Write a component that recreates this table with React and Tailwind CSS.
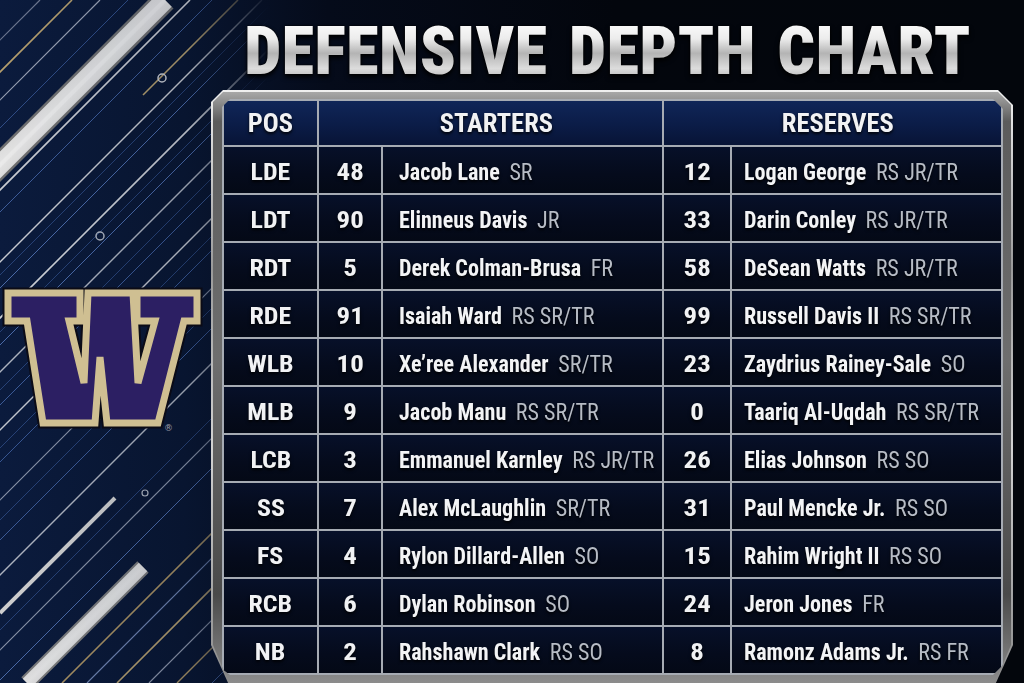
import React from "react";

const rows = [
  ["LDE", "48", "Jacob Lane", "SR", "12", "Logan George", "RS JR/TR"],
  ["LDT", "90", "Elinneus Davis", "JR", "33", "Darin Conley", "RS JR/TR"],
  ["RDT", "5", "Derek Colman-Brusa", "FR", "58", "DeSean Watts", "RS JR/TR"],
  ["RDE", "91", "Isaiah Ward", "RS SR/TR", "99", "Russell Davis II", "RS SR/TR"],
  ["WLB", "10", "Xe\u2019ree Alexander", "SR/TR", "23", "Zaydrius Rainey-Sale", "SO"],
  ["MLB", "9", "Jacob Manu", "RS SR/TR", "0", "Taariq Al-Uqdah", "RS SR/TR"],
  ["LCB", "3", "Emmanuel Karnley", "RS JR/TR", "26", "Elias Johnson", "RS SO"],
  ["SS", "7", "Alex McLaughlin", "SR/TR", "31", "Paul Mencke Jr.", "RS SO"],
  ["FS", "4", "Rylon Dillard-Allen", "SO", "15", "Rahim Wright II", "RS SO"],
  ["RCB", "6", "Dylan Robinson", "SO", "24", "Jeron Jones", "FR"],
  ["NB", "2", "Rahshawn Clark", "RS SO", "8", "Ramonz Adams Jr.", "RS FR"],
];

const lines = [
  { c: 40, w: 1.2, col: "#6d7790" },
  { c: 72, w: 1.6, col: "#b59f6e" },
  { c: 100, w: 1.2, col: "#9aa2b4" },
  { c: 128, w: 1, col: "#2f4c86" },
  { c: 190, w: 1.6, col: "#c9ccd2" },
  { c: 212, w: 1, col: "#3d5c99" },
  { c: 238, w: 1.6, col: "#b59f6e", y0: 0, y1: 95 },
  { c: 262, w: 1.4, col: "#c9ccd2" },
  { c: 275, w: 0.8, col: "#2f4c86" },
  { c: 288, w: 1, col: "#4a6aa8" },
  { c: 318, w: 1.6, col: "#d0d3d8" },
  { c: 332, w: 0.8, col: "#2f4c86" },
  { c: 345, w: 1, col: "#4a6aa8" },
  { c: 372, w: 1.4, col: "#aeb4c0" },
  { c: 390, w: 0.8, col: "#2f4c86" },
  { c: 405, w: 1, col: "#3b5a96" },
  { c: 430, w: 1.4, col: "#c2c6ce" },
  { c: 448, w: 0.8, col: "#2f4c86" },
  { c: 462, w: 1, col: "#365591" },
  { c: 500, w: 1.2, col: "#8d96aa" },
  { c: 520, w: 0.8, col: "#2f4c86" },
  { c: 540, w: 1, col: "#3b5a96" },
  { c: 575, w: 1.4, col: "#aeb4c0" },
  { c: 630, w: 0.8, col: "#2f4c86" },
  { c: 650, w: 1.2, col: "#8d96aa" },
  { c: 680, w: 1, col: "#4a6aa8" },
  { c: 745, w: 1.6, col: "#a89162" },
  { c: 770, w: 1.2, col: "#6f84b0" },
  { c: 800, w: 1.6, col: "#b59f6e" },
  { c: 832, w: 1.2, col: "#8d96aa" },
  { c: 860, w: 1.4, col: "#a89162" },
  { c: 895, w: 1, col: "#4a6aa8" },
];

function Seg({ c, w, col, y0 = 0, y1 = 683 }) {
  return <line x1={c - y0} y1={y0} x2={c - y1} y2={y1} stroke={col} strokeWidth={w} />;
}

function Decor() {
  return (
    <svg className="absolute left-0 top-0" width="270" height="683" viewBox="0 0 270 683">
      <defs>
        <linearGradient id="fadeR" x1="0" y1="0" x2="1" y2="0">
          <stop offset="0" stopColor="#fff" stopOpacity="1" />
          <stop offset="0.7" stopColor="#fff" stopOpacity="0.85" />
          <stop offset="1" stopColor="#fff" stopOpacity="0" />
        </linearGradient>
        <mask id="m">
          <rect x="0" y="0" width="270" height="683" fill="url(#fadeR)" />
        </mask>
        <linearGradient id="silv" x1="0" y1="0" x2="1" y2="1">
          <stop offset="0" stopColor="#8d8d8d" />
          <stop offset="0.5" stopColor="#e4e4e4" />
          <stop offset="1" stopColor="#7a7a7a" />
        </linearGradient>
      </defs>
      <g mask="url(#m)">
        {lines.map((l, i) => (
          <Seg key={i} {...l} />
        ))}
        <line x1="165" y1="0" x2="-10" y2="175" stroke="#6f6f6f" strokeWidth="24" />
        <line x1="165" y1="0" x2="-10" y2="175" stroke="url(#silv)" strokeWidth="19" />
        <line x1="165" y1="0" x2="-10" y2="175" stroke="#f2f2f2" strokeWidth="4" opacity="0.5" />
        <line x1="115" y1="498" x2="0" y2="613" stroke="#cfcfcf" strokeWidth="4" />
        <line x1="143" y1="567" x2="27" y2="683" stroke="#7a7a7a" strokeWidth="16" />
        <line x1="143" y1="567" x2="27" y2="683" stroke="url(#silv)" strokeWidth="12" />
        <circle cx="162" cy="78" r="4" fill="none" stroke="#c9ccd2" strokeWidth="1.5" />
        <circle cx="100" cy="236" r="4" fill="none" stroke="#aeb4c0" strokeWidth="1.5" />
        <circle cx="145" cy="493" r="3" fill="none" stroke="#aeb4c0" strokeWidth="1.2" />
      </g>
    </svg>
  );
}

const wPts =
  "8,293 80,293 80,321 69,321 84,383 88,293 133,293 138,383 155,321 137,321 137,293 197,293 197,321 184,321 158,423 107,423 100,357 95,423 43,423 27,321 8,321";

function WLogo() {
  return (
    <svg width="211" height="150" viewBox="0 285 211 150">
      <polygon points={wPts} fill="#0b0b16" stroke="#0b0b16" strokeWidth="11" strokeLinejoin="miter" />
      <polygon points={wPts} fill="#2c1f63" stroke="#cfbf92" strokeWidth="7" strokeLinejoin="miter" />
      <text x="164" y="431" fontSize="9" fill="#9a9aa6" fontFamily="DejaVu Sans, sans-serif">
        ®
      </text>
    </svg>
  );
}

const cellBase =
  "h-[46px] overflow-hidden bg-[linear-gradient(180deg,#071029_0%,#050b1c_60%,#040916_100%)] flex items-center";
const headCell =
  "h-[44px] pt-[2px] bg-[linear-gradient(180deg,#102658_0%,#0b1c47_55%,#081436_100%)] flex items-center justify-center text-[25px] font-bold text-[#f1f2f4]";
const shadow = "[text-shadow:0_2px_3px_rgba(0,0,0,0.9)]";
const numCell = `${cellBase} pt-[3px] justify-center text-[24px] font-bold text-[#f1f2f4] ${shadow}`;

function Name({ name, cls }) {
  return (
    <span className="inline-block origin-left scale-x-[0.96] whitespace-nowrap text-[23px]">
      <span className="font-bold text-[#f3f4f6]">{name}</span>
      <span className="ml-[10px] text-[#b7bcc5]">{cls}</span>
    </span>
  );
}

export default function App() {
  return (
    <div className="relative w-[1024px] h-[683px] overflow-hidden bg-[linear-gradient(90deg,#0b1b3d_0%,#081530_18%,#050b1a_32%,#03060d_60%,#03060c_100%)] font-['Roboto_Condensed','DejaVu_Sans_Condensed',sans-serif]">
      <Decor />
      <div className="relative flex h-full">
        <div className="w-[211px] shrink-0 pt-[285px]">
          <WLogo />
        </div>
        <div className="w-[802px] shrink-0 flex flex-col">
          <h1 className="mt-[19px] h-[67px] pr-[9px] flex justify-center whitespace-nowrap text-[66px] leading-none font-black [filter:drop-shadow(0_0_1px_#000)_drop-shadow(0_3px_2px_rgba(0,0,0,0.9))]">
            <span className="inline-block tracking-[0.5px] [word-spacing:6px] bg-[linear-gradient(180deg,#ffffff_0%,#ececec_30%,#b4b4b4_52%,#dcdcdc_75%,#a6a6a6_100%)] bg-clip-text text-transparent">
              DEFENSIVE DEPTH CHART
            </span>
          </h1>
          <div className="mt-[5px] p-[2px] bg-[linear-gradient(180deg,#f0f0f0_0%,#9a9a9a_30%,#d2d2d2_60%,#8a8a8a_100%)] [clip-path:polygon(0_12px,12px_0,calc(100%_-_15px)_0,100%_15px,100%_calc(100%_-_40px),calc(100%_-_18px)_100%,18px_100%,0_calc(100%_-_40px))]">
            <div className="pt-[7px] pl-[9px] pr-[8px] pb-[8px] bg-[linear-gradient(180deg,#a8a8a8_0%,#5c5c5c_5%,#6e6e6e_45%,#4a4a4a_85%,#8c8c8c_100%)] [clip-path:polygon(0_10px,10px_0,calc(100%_-_13px)_0,100%_13px,100%_calc(100%_-_38px),calc(100%_-_16px)_100%,16px_100%,0_calc(100%_-_38px))]">
              <div className="grid grid-cols-[93px_62px_279px_66px_269px] gap-[2px] p-[2px] bg-[#a6abb3] [clip-path:polygon(0_8px,8px_0,calc(100%_-_10px)_0,100%_10px,100%_calc(100%_-_10px),calc(100%_-_10px)_100%,8px_100%,0_calc(100%_-_6px))]">
                <div className={`${headCell} ${shadow}`}>
                  <span className="inline-block scale-x-[1.06]">POS</span>
                </div>
                <div className={`${headCell} ${shadow} col-span-2 pl-[12px]`}>
                  <span className="inline-block scale-x-[1.06]">STARTERS</span>
                </div>
                <div className={`${headCell} ${shadow} col-span-2 pl-[10px]`}>
                  <span className="inline-block scale-x-[1.06]">RESERVES</span>
                </div>
                {rows.map((r, i) => (
                  <React.Fragment key={i}>
                    <div className={numCell}>
                      <span className="inline-block scale-x-[1.08]">{r[0]}</span>
                    </div>
                    <div className={numCell}>
                      <span className="inline-block scale-x-[1.12]">{r[1]}</span>
                    </div>
                    <div className={`${cellBase} pt-[7px] pl-[16px] ${shadow}`}>
                      <Name name={r[2]} cls={r[3]} />
                    </div>
                    <div className={numCell}>
                      <span className="inline-block scale-x-[1.12]">{r[4]}</span>
                    </div>
                    <div className={`${cellBase} pt-[7px] pl-[12px] ${shadow}`}>
                      <Name name={r[5]} cls={r[6]} />
                    </div>
                  </React.Fragment>
                ))}
              </div>
            </div>
          </div>
        </div>
      </div>
    </div>
  );
}
